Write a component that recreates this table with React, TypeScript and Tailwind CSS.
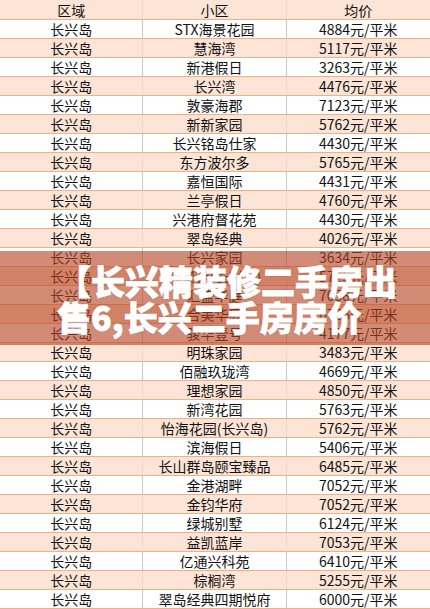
import React from "react"

// Region / community / average price rows
const rows: [string, string][] = [
  ["STX海景花园", "4884"],
  ["慧海湾", "5117"],
  ["新港假日", "3263"],
  ["长兴湾", "4476"],
  ["敦豪海郡", "7123"],
  ["新新家园", "5762"],
  ["长兴铭岛仕家", "4430"],
  ["东方波尔多", "5765"],
  ["嘉恒国际", "4431"],
  ["兰亭假日", "4760"],
  ["兴港府督花苑", "4430"],
  ["翠岛经典", "4026"],
  ["长兴家园", "3634"],
  ["海景苑(长兴岛)", "5725"],
  ["汇盛华庭", "7058"],
  ["合美华庭", "6765"],
  ["骏华壹号", "4177"],
  ["明珠家园", "3483"],
  ["佰融玖珑湾", "4669"],
  ["理想家园", "4850"],
  ["新湾花园", "5763"],
  ["怡海花园(长兴岛)", "5762"],
  ["滨海假日", "5406"],
  ["长山群岛颐宝臻品", "6485"],
  ["金港湖畔", "7052"],
  ["金钧华府", "7052"],
  ["绿城别墅", "6124"],
  ["益凯蓝岸", "7053"],
  ["亿通兴科苑", "6410"],
  ["棕榈湾", "5255"],
  ["翠岛经典四期悦府", "6000"],
]

function Row({ cells, shaded, header }: { cells: string[]; shaded: boolean; header?: boolean }) {
  return (
    <div
      className={
        "grid grid-cols-3 border-b border-[#f4b084] " +
        (header ? "h-[20px] " : "h-[19px] ") +
        (shaded ? "bg-[#fce4d6]" : "bg-white")
      }
    >
      {cells.map((c, i) => (
        <div
          key={i}
          className={
            "flex items-center justify-center leading-none " +
            (i < 2 ? (shaded ? "border-r border-[#f0d8ca]" : "border-r border-[#c8c8c8]") : "")
          }
        >
          {c}
        </div>
      ))}
    </div>
  )
}

export default function App() {
  return (
    <div
      className="relative w-[430px] h-[609px] overflow-hidden bg-white text-[14px] text-[#111]"
      style={{ fontFamily: '"Noto Sans CJK SC", "Liberation Sans", sans-serif' }}
    >
      <Row cells={["区域", "小区", "均价"]} shaded header />
      {rows.map(([name, price], i) => (
        <Row key={i} cells={["长兴岛", name, `${price}元/平米`]} shaded={i % 2 === 1} />
      ))}

      {/* title banner over the table */}
      <div className="absolute left-0 right-0 top-[251px] h-[94px] bg-[rgba(182,68,34,0.62)] flex flex-col justify-center pl-[57px] pt-[2px]">
        <div className="whitespace-nowrap text-white font-black text-[34px] leading-[36px] [-webkit-text-stroke:0.8px_white] [text-shadow:0_0_2px_rgba(0,0,0,0.25)]">
          【长兴精装修二手房出
        </div>
        <div className="whitespace-nowrap text-white font-black text-[34px] leading-[36px] [-webkit-text-stroke:0.8px_white] [text-shadow:0_0_2px_rgba(0,0,0,0.25)]">
          售6,长兴二手房房价
        </div>
      </div>
    </div>
  )
}
